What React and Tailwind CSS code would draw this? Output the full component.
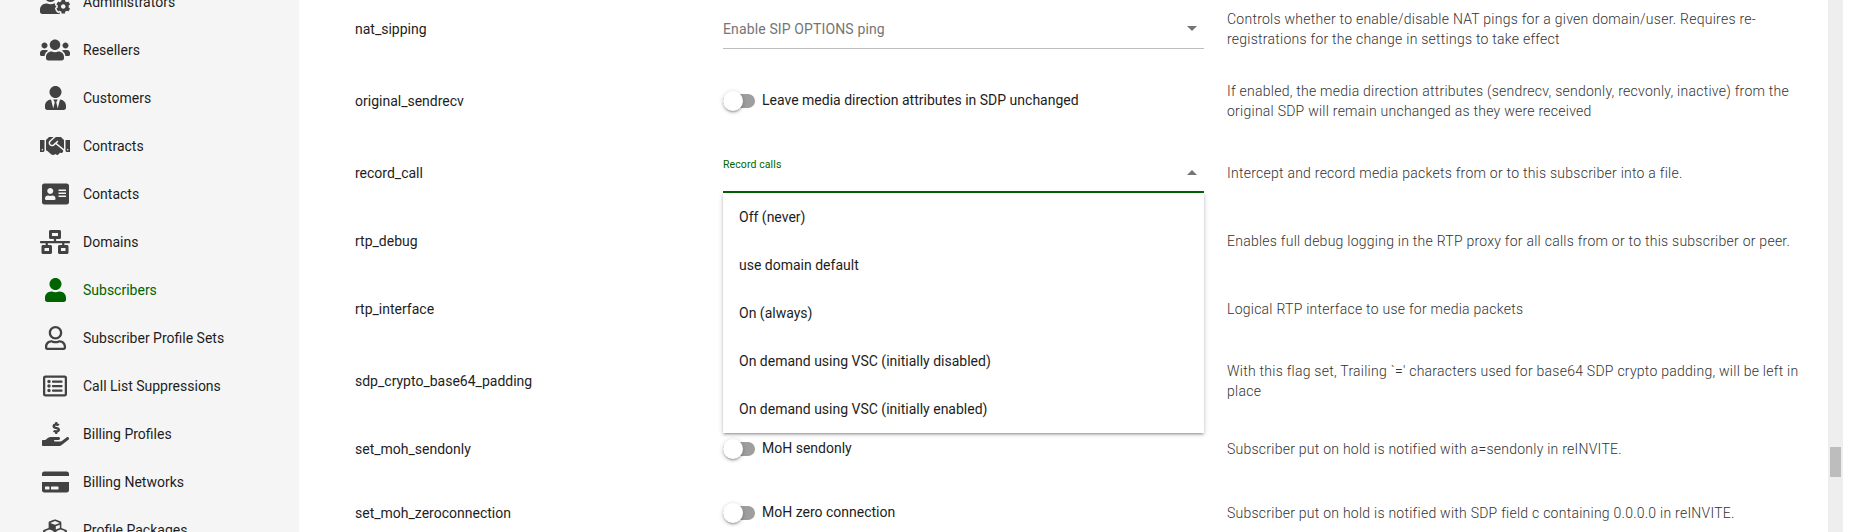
import React from 'react';
import {
  FaUserCog,
  FaUsers,
  FaUserTie,
  FaHandshake,
  FaAddressCard,
  FaNetworkWired,
  FaUser,
  FaRegUser,
  FaRegListAlt,
  FaHandHoldingUsd,
  FaCreditCard,
  FaCubes,
} from 'react-icons/fa';

// icon widths follow the font awesome viewBox at 24px height
const navItems = [
  { label: 'Administrators', icon: FaUserCog, size: 'w-[30px]' },
  { label: 'Resellers', icon: FaUsers, size: 'w-[30px]' },
  { label: 'Customers', icon: FaUserTie, size: 'w-[21px]' },
  { label: 'Contracts', icon: FaHandshake, size: 'w-[30px]' },
  { label: 'Contacts', icon: FaAddressCard, size: 'w-[27px]' },
  { label: 'Domains', icon: FaNetworkWired, size: 'w-[30px]' },
  { label: 'Subscribers', icon: FaUser, size: 'w-[21px]', active: true },
  { label: 'Subscriber Profile Sets', icon: FaRegUser, size: 'w-[21px]' },
  { label: 'Call List Suppressions', icon: FaRegListAlt, size: 'w-6' },
  { label: 'Billing Profiles', icon: FaHandHoldingUsd, size: 'w-[27px]' },
  { label: 'Billing Networks', icon: FaCreditCard, size: 'w-[27px]' },
  { label: 'Profile Packages', icon: FaCubes, size: 'w-6' },
];

const menuOptions = [
  'Off (never)',
  'use domain default',
  'On (always)',
  'On demand using VSC (initially disabled)',
  'On demand using VSC (initially enabled)',
];

function Sidebar() {
  return (
    <aside className="w-[299px] shrink-0 bg-[#f5f5f5] -mt-[22px]">
      {navItems.map(({ label, icon: Icon, size, active }) => (
        <div
          key={label}
          className={`flex h-12 items-center pl-[40px] ${active ? 'text-[#006400]' : 'text-[#1d1d1d]'}`}
        >
          <span className={`flex w-[30px] justify-center ${active ? '' : 'text-[#424242]'}`}>
            <Icon className={`h-6 shrink-0 ${size}`} />
          </span>
          <span className="ml-[13px] text-sm">{label}</span>
        </div>
      ))}
    </aside>
  );
}

function Toggle({ label }) {
  return (
    <div className="flex items-center">
      <div className="relative h-[14px] w-8 rounded-full bg-[#9e9e9e]">
        <div className="absolute -top-[3px] left-0 h-5 w-5 rounded-full bg-white shadow-[0_1px_5px_rgba(0,0,0,0.2),0_2px_2px_rgba(0,0,0,0.14),0_3px_1px_-2px_rgba(0,0,0,0.12)]" />
      </div>
      <span className="ml-[7px] -mt-[2px] text-sm text-[#1d1d1d]">{label}</span>
    </div>
  );
}

function Caret({ up }) {
  return (
    <svg width="10" height="5" viewBox="0 0 10 5" className={`absolute right-[7px] top-[33px] ${up ? 'rotate-180' : ''}`}>
      <path d="M0 0h10L5 5z" fill="#757575" />
    </svg>
  );
}

function Row({ name, height, desc, children }) {
  return (
    <div className={`flex ${height}`}>
      <div className="flex w-[424px] shrink-0 items-center pl-[56px] text-sm text-[#1d1d1d]">{name}</div>
      <div className="w-[481px] shrink-0">{children}</div>
      <div className="flex w-[612px] items-center pl-[23px] text-sm leading-5 font-light tracking-[0.25px] text-[#333333]">{desc}</div>
    </div>
  );
}

export default function App() {
  return (
    <div className="flex h-[532px] overflow-hidden bg-white font-['Roboto',sans-serif]">
      <Sidebar />

      <main className="w-[1529px] shrink-0 -mt-[7px]">
        <Row
          name="nat_sipping"
          height="h-[72px]"
          desc="Controls whether to enable/disable NAT pings for a given domain/user. Requires re-registrations for the change in settings to take effect"
        >
          <div className="relative h-14 border-b border-[#bdbdbd] pt-[26px] text-sm leading-5 tracking-[0.00937em] text-[#757575]">
            Enable SIP OPTIONS ping
            <Caret />
          </div>
        </Row>

        <Row
          name="original_sendrecv"
          height="h-[72px]"
          desc="If enabled, the media direction attributes (sendrecv, sendonly, recvonly, inactive) from the original SDP will remain unchanged as they were received"
        >
          <div className="flex h-full items-center">
            <Toggle label="Leave media direction attributes in SDP unchanged" />
          </div>
        </Row>

        <Row
          name="record_call"
          height="h-[72px]"
          desc="Intercept and record media packets from or to this subscriber into a file."
        >
          <div className="relative h-14 border-b-2 border-[#006400] pt-[22px] text-[10.5px] leading-3 tracking-[0.00937em] text-[#006400]">
            Record calls
            <Caret up />
            <div className="absolute left-0 top-[56px] z-10 w-full bg-white tracking-normal shadow-[0_1px_5px_rgba(0,0,0,0.2),0_2px_2px_rgba(0,0,0,0.14),0_3px_1px_-2px_rgba(0,0,0,0.12)]">
              {menuOptions.map((option) => (
                <div key={option} className="flex h-12 items-center px-4 text-sm text-[#1d1d1d]">
                  {option}
                </div>
              ))}
            </div>
          </div>
        </Row>

        <Row
          name="rtp_debug"
          height="h-16"
          desc="Enables full debug logging in the RTP proxy for all calls from or to this subscriber or peer."
        />

        <Row
          name="rtp_interface"
          height="h-[72px]"
          desc="Logical RTP interface to use for media packets"
        />

        <Row
          name="sdp_crypto_base64_padding"
          height="h-[72px]"
          desc="With this flag set, Trailing `=' characters used for base64 SDP crypto padding, will be left in place"
        />

        <Row
          name="set_moh_sendonly"
          height="h-16"
          desc="Subscriber put on hold is notified with a=sendonly in reINVITE."
        >
          <div className="flex h-full items-center">
            <Toggle label="MoH sendonly" />
          </div>
        </Row>

        <Row
          name="set_moh_zeroconnection"
          height="h-16"
          desc="Subscriber put on hold is notified with SDP field c containing 0.0.0.0 in reINVITE."
        >
          <div className="flex h-full items-center">
            <Toggle label="MoH zero connection" />
          </div>
        </Row>
      </main>

      <div className="h-full w-[15px] shrink-0 bg-[#eeeeee] pl-[2px] pt-[447px]">
        <div className="h-[30px] w-[11px] bg-[#bdbdbd]" />
      </div>
    </div>
  );
}
